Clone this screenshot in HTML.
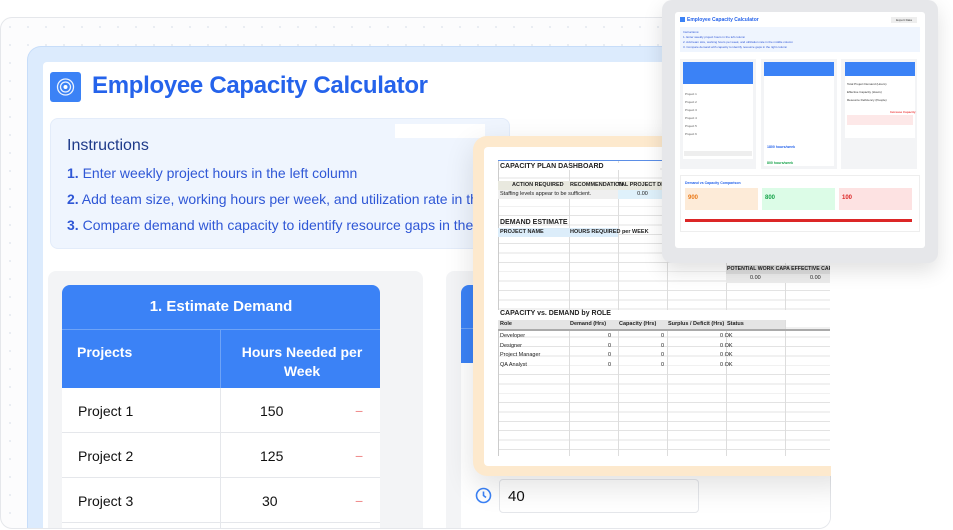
<!DOCTYPE html>
<html><head><meta charset="utf-8"><style>
*{margin:0;padding:0;box-sizing:border-box}
html,body{width:953px;height:530px;overflow:hidden}
body{background:#fff;font-family:"Liberation Sans",sans-serif;position:relative}
.a{position:absolute}
.clip{left:0;top:17px;width:831px;height:512px;border:1px solid #e5e7eb;border-radius:12px;background-color:#fcfcfd;background-image:radial-gradient(#e8ecf2 1px,transparent 1.2px);background-size:18px 18px;overflow:hidden}
.blue{left:26px;top:28px;width:820px;height:483px;background:#dcebfd;border:1px solid #c7ddf9;border-bottom:0;border-radius:14px 14px 0 0}
.white{left:42px;top:44px;width:800px;height:466px;background:#fff;border-radius:4px 4px 0 0}
.logo{left:49px;top:54px;width:31px;height:30px;background:#3b82f6;border-radius:3px}
h1{position:absolute;left:91px;top:54px;font-size:24px;color:#2563eb;font-weight:bold;letter-spacing:-0.3px}
.instr{left:49px;top:100px;width:460px;height:131px;background:#eff5fe;border:1px solid #e3ecfa;border-radius:8px}
.instr p{position:absolute;left:16px;font-size:14px;color:#2f57d6;white-space:nowrap}
.panel{background:#f3f4f6;border-radius:8px 8px 0 0}
.th{background:#3b82f6;color:#fff}
.row{left:61px;width:318px;height:45px;background:#fff;border-bottom:1px solid #e5e7eb;font-size:14px;color:#111}
.row span{position:absolute;top:15px}
.sheet div{position:absolute;white-space:nowrap;font-size:6px;color:#222}
.b{font-weight:bold}
.m div{position:absolute;white-space:nowrap}
</style></head><body>
<div class="a clip">
<div class="a blue"></div>
<div class="a white"></div>
<div class="a logo"><svg width="31" height="30"><circle cx="15.5" cy="15" r="8" fill="none" stroke="#fff" stroke-width="1.3" opacity=".9"/><circle cx="15.5" cy="15" r="5" fill="none" stroke="#fff" stroke-width="1.3" opacity=".9"/><circle cx="15.5" cy="15" r="2" fill="#fff"/></svg></div>
<h1>Employee Capacity Calculator</h1>
<div class="a instr">
<p style="top:18px;font-size:16px;color:#1e3a8a">Instructions</p>
<p style="top:46px"><b>1.</b> Enter weekly project hours in the left column</p>
<p style="top:72px"><b>2.</b> Add team size, working hours per week, and utilization rate in the middle column</p>
<p style="top:98px"><b>3.</b> Compare demand with capacity to identify resource gaps in the right column</p>
</div>
<div class="a" style="left:394px;top:106px;width:90px;height:14px;background:#fff"></div>

<div class="a panel" style="left:47px;top:253px;width:375px;height:257px"></div>
<div class="a panel" style="left:445px;top:253px;width:385px;height:257px"></div>
<div class="a th" style="left:61px;top:267px;width:318px;height:44px;border-radius:8px 8px 0 0;text-align:center;font-size:15px;font-weight:bold;line-height:44px">1. Estimate Demand</div>
<div class="a th" style="left:61px;top:311px;width:318px;height:59px;border-top:1px solid #6ea3f7;font-size:14px;font-weight:bold">
<div class="a" style="left:158px;top:0;width:1px;height:59px;background:#6ea3f7"></div>
<div class="a" style="left:15px;top:14px">Projects</div>
<div class="a" style="left:170px;top:13px;width:140px;text-align:center;line-height:19px">Hours Needed per Week</div></div>
<div class="a row" style="top:370px"><span style="left:16px">Project 1</span><span style="left:198px">150</span><span style="left:293px;color:#f08a8a">−</span></div>
<div class="a row" style="top:415px"><span style="left:16px">Project 2</span><span style="left:198px">125</span><span style="left:293px;color:#f08a8a">−</span></div>
<div class="a row" style="top:460px"><span style="left:16px">Project 3</span><span style="left:200px">30</span><span style="left:293px;color:#f08a8a">−</span></div>
<div class="a row" style="top:505px;height:5px;border-bottom:0"></div>
<div class="a" style="left:219px;top:370px;width:1px;height:140px;background:#e5e7eb"></div>
<div class="a th" style="left:460px;top:267px;width:370px;height:78px;border-radius:8px 8px 0 0"></div>
<div class="a" style="left:460px;top:310px;width:370px;height:1px;background:#6ea3f7"></div>
<div class="a" style="left:460px;top:345px;width:370px;height:165px;background:#fff"></div>
<svg class="a" style="left:474px;top:469px" width="17" height="17"><circle cx="8.5" cy="8.5" r="7" fill="none" stroke="#3b82f6" stroke-width="1.6"/><path d="M8.5 4.5V8.5L11 10.5" fill="none" stroke="#3b82f6" stroke-width="1.6"/></svg>
<div class="a" style="left:498px;top:461px;width:200px;height:34px;border:1px solid #e5e7eb;border-radius:4px;font-size:15px;padding:8px 8px;color:#111">40</div>
</div>

<!-- sheet -->
<div class="a" style="left:473px;top:136px;width:380px;height:340px;background:#fde9cd;border-radius:14px;box-shadow:0 10px 30px rgba(0,0,0,.12)"></div>
<div class="a" style="left:484px;top:147px;width:360px;height:319px;background:#fff;border-radius:4px"></div>
<div class="a sheet" style="left:498px;top:160px;width:332px;height:296px;overflow:hidden;background-image:repeating-linear-gradient(to bottom,transparent 0,transparent 8.4px,#e3e3e3 8.4px,#e3e3e3 9.35px)">
<div style="left:0;top:0;width:1px;height:296px;background:#ccc"></div>
<div style="left:71px;top:0;width:1px;height:296px;background:#ddd"></div>
<div style="left:120px;top:0;width:1px;height:296px;background:#ddd"></div>
<div style="left:169px;top:0;width:1px;height:296px;background:#ddd"></div>
<div style="left:228px;top:0;width:1px;height:296px;background:#ddd"></div>
<div style="left:287px;top:0;width:1px;height:296px;background:#ddd"></div>
<div style="left:0;top:0;width:170px;height:1px;background:#5b8ee6"></div>
<div class="b" style="left:2px;top:3px;font-size:7px;background:#fff;width:160px">CAPACITY PLAN DASHBOARD</div>
<div class="b" style="left:0;top:21px;width:170px;height:9px;background:#e9e9df;font-size:5.5px;line-height:9px"><span style="position:absolute;left:14px">ACTION REQUIRED</span><span style="position:absolute;left:72px">RECOMMENDATION</span><span style="position:absolute;left:120px">TAL PROJECT DEMA</span></div>
<div style="left:0;top:30px;width:120px;height:9px;background:#efefef;font-size:5.5px;line-height:9px;padding-left:2px">Staffing levels appear to be sufficient.</div>
<div style="left:120px;top:30px;width:49px;height:9px;background:#dff1fb;font-size:5.5px;line-height:9px;text-align:center">0.00</div>
<div class="b" style="left:2px;top:59px;font-size:7px">DEMAND ESTIMATE</div>
<div class="b" style="left:0;top:68px;width:120px;height:9px;background:#dcedfa;font-size:5.5px;line-height:9px"><span style="position:absolute;left:2px">PROJECT NAME</span><span style="position:absolute;left:72px">HOURS REQUIRED per WEEK</span></div>
<div class="b" style="left:228px;top:105px;width:104px;height:9px;background:#dcdcdc;font-size:5.2px;line-height:9px;padding-left:1px">POTENTIAL WORK CAPA EFFECTIVE CAPACI</div>
<div style="left:228px;top:114px;width:104px;height:9px;background:#ececec;font-size:5.5px;line-height:9px"><span style="position:absolute;left:24px">0.00</span><span style="position:absolute;left:84px">0.00</span></div>
<div class="b" style="left:0;top:150px;width:332px;height:10px;background:#fff;font-size:7px;padding-left:2px">CAPACITY vs. DEMAND by ROLE</div>
<div class="b" style="left:0;top:160px;width:287px;height:9px;background:#e4e4e4;font-size:5.5px;line-height:9px"><span style="position:absolute;left:2px">Role</span><span style="position:absolute;left:72px">Demand (Hrs)</span><span style="position:absolute;left:121px">Capacity (Hrs)</span><span style="position:absolute;left:170px">Surplus / Deficit (Hrs)</span><span style="position:absolute;left:229px">Status</span></div>
<div style="left:0;top:169px;width:332px;height:2px;background:#aaa"></div>
<div style="left:2px;top:172px;font-size:5.5px;line-height:9.6px">Developer<br>Designer<br>Project Manager<br>QA Analyst</div>
<div style="left:110px;top:172px;font-size:5.5px;line-height:9.6px">0<br>0<br>0<br>0</div>
<div style="left:163px;top:172px;font-size:5.5px;line-height:9.6px">0<br>0<br>0<br>0</div>
<div style="left:222px;top:172px;font-size:5.5px;line-height:9.6px">0 OK<br>0 OK<br>0 OK<br>0 OK</div>
</div>
<div class="a" style="left:831px;top:140px;width:122px;height:390px;background:#fff"></div>

<!-- mini screenshot -->
<div class="a" style="left:662px;top:0;width:276px;height:263px;background:#e6e7ea;border-radius:10px;box-shadow:0 8px 20px rgba(0,0,0,.12)"></div>
<div class="a m" style="left:675px;top:12px;width:250px;height:236px;background:#fff;border-radius:3px;font-size:3px;color:#333">
<div style="left:5px;top:5px;width:5px;height:5px;background:#3b82f6"></div>
<div class="b" style="left:12px;top:5px;font-size:5px;color:#2563eb">Employee Capacity Calculator</div>
<div style="left:216px;top:5px;width:26px;height:6px;background:#eee;font-size:3px;line-height:6px;text-align:center">Export Data</div>
<div style="left:5px;top:15px;width:240px;height:25px;background:#eff5fe;color:#2f57d6;padding:3px;line-height:5px;font-size:3px">Instructions:<br>1. Enter weekly project hours in the left column<br>2. Add team size, working hours per week, and utilization rate in the middle column<br>3. Compare demand with capacity to identify resource gaps in the right column</div>
<div style="left:5px;top:47px;width:76px;height:110px;background:#f3f4f6"></div>
<div style="left:86px;top:47px;width:76px;height:110px;background:#f3f4f6"></div>
<div style="left:166px;top:47px;width:76px;height:110px;background:#f3f4f6"></div>
<div style="left:8px;top:50px;width:70px;height:22px;background:#3b82f6"></div>
<div style="left:8px;top:72px;width:70px;height:75px;background:#fff"></div>
<div style="left:10px;top:78px;line-height:8px;color:#555">Project 1<br>Project 2<br>Project 3<br>Project 4<br>Project 5<br>Project 6</div>
<div style="left:9px;top:139px;width:68px;height:5px;background:#eee"></div>
<div style="left:89px;top:50px;width:70px;height:14px;background:#3b82f6"></div>
<div style="left:89px;top:64px;width:70px;height:90px;background:#fff"></div>
<div class="b" style="left:92px;top:127px;color:#2563eb;font-size:3.5px;line-height:16px">1800 hours/week<br><span style="color:#16a34a">800 hours/week</span></div>
<div style="left:170px;top:50px;width:70px;height:14px;background:#3b82f6"></div>
<div style="left:170px;top:64px;width:70px;height:62px;background:#fff"></div>
<div style="left:172px;top:68px;line-height:8px">Total Project Demand (Hours)<br>Effective Capacity (Hours)<br>Resource Deficiency (People)</div>
<div class="b" style="left:215px;top:98px;color:#ef4444">Increase Capacity</div>
<div style="left:172px;top:103px;width:66px;height:10px;background:#fde8e8"></div>
<div style="left:5px;top:163px;width:240px;height:57px;border:1px solid #eee"></div>
<div class="b" style="left:10px;top:169px;color:#2563eb;font-size:3.5px">Demand vs Capacity Comparison</div>
<div style="left:10px;top:176px;width:73px;height:22px;background:#fdebd8"></div>
<div style="left:87px;top:176px;width:73px;height:22px;background:#dcfce7"></div>
<div style="left:164px;top:176px;width:73px;height:22px;background:#fde2e2"></div>
<div class="b" style="left:13px;top:183px;font-size:6px;color:#ea7a1a">900</div>
<div class="b" style="left:90px;top:183px;font-size:6px;color:#16a34a">800</div>
<div class="b" style="left:167px;top:183px;font-size:6px;color:#dc2626">100</div>
<div style="left:10px;top:207px;width:227px;height:3px;background:#dc2626"></div>
</div>
</body></html>
